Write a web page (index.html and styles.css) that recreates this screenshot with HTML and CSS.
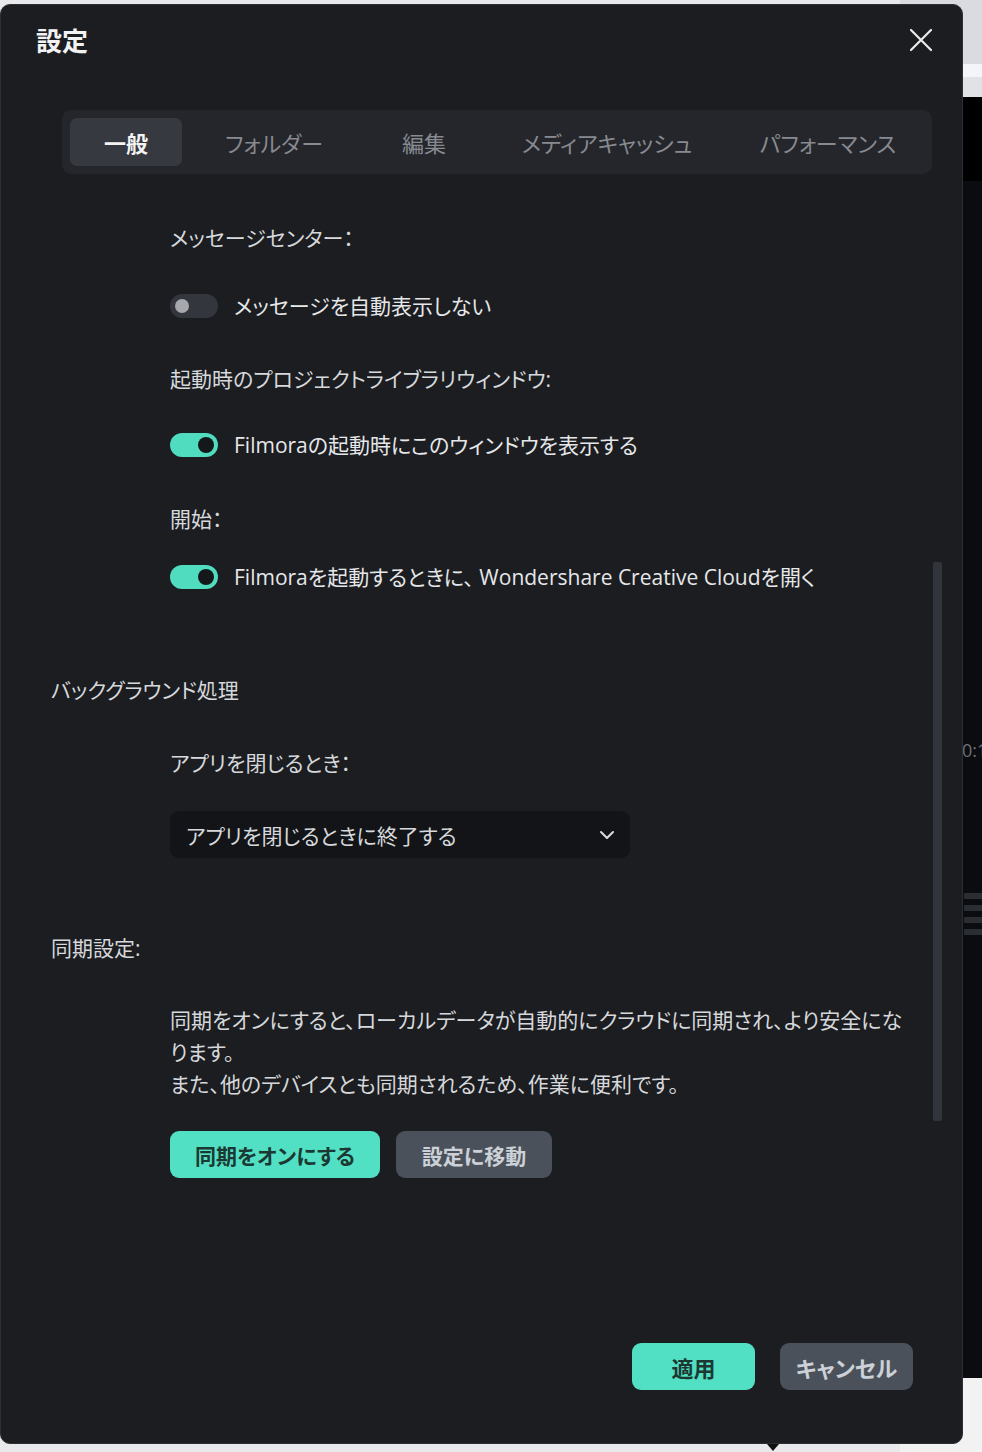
FILE: index.html
```html
<!DOCTYPE html>
<html lang="ja">
<head>
	<meta charset="utf-8">
	<title>設定</title>
	<link rel="stylesheet" href="styles.css">
</head>
<body>
	<!-- App window behind the dialog -->
	<div class="behind">
		<div class="behind-top"></div>
		<div class="behind-stripe"></div>
		<div class="behind-bar"></div>
		<div class="behind-app">
			<span class="behind-time">0:1</span>
			<div class="behind-rows">
				<i></i><i></i><i></i><i></i>
			</div>
		</div>
		<div class="behind-bottom"></div>
	</div>

	<!-- Settings dialog -->
	<div class="dialog">
		<header class="dialog-header">
			<h1>設定</h1>
			<svg class="close" width="24" height="24" viewBox="0 0 24 24">
				<path d="M2 2 L22 22 M22 2 L2 22" stroke="#ececec" stroke-width="2.2" stroke-linecap="round"/>
			</svg>
		</header>

		<nav class="tabs">
			<span class="tab tab-general active">一般</span>
			<span class="tab tab-folder">フォルダー</span>
			<span class="tab tab-edit">編集</span>
			<span class="tab tab-cache">メディアキャッシュ</span>
			<span class="tab tab-perf">パフォーマンス</span>
		</nav>

		<div class="content">
			<p class="label first">メッセージセンター：</p>
			<div class="toggle-row row-1">
				<span class="toggle"></span>
				<span>メッセージを自動表示しない</span>
			</div>

			<p class="label lbl-2">起動時のプロジェクトライブラリウィンドウ:</p>
			<div class="toggle-row row-2">
				<span class="toggle on"></span>
				<span>Filmoraの起動時にこのウィンドウを表示する</span>
			</div>

			<p class="label lbl-3">開始：</p>
			<div class="toggle-row row-3">
				<span class="toggle on"></span>
				<span>Filmoraを起動するときに、 Wondershare Creative Cloudを開く</span>
			</div>

			<h2 class="heading head-1">バックグラウンド処理</h2>
			<p class="label lbl-4">アプリを閉じるとき：</p>
			<div class="select">
				<span>アプリを閉じるときに終了する</span>
				<svg width="16" height="10" viewBox="0 0 16 10">
					<path d="M2 2 L8 8 L14 2" fill="none" stroke="#dcdcdc" stroke-width="2" stroke-linecap="round" stroke-linejoin="round"/>
				</svg>
			</div>

			<h2 class="heading head-2">同期設定:</h2>
			<p class="desc">同期をオンにすると、ローカルデータが自動的にクラウドに同期され、より安全にな<br>ります。<br>また、他のデバイスとも同期されるため、作業に便利です。</p>
			<div class="actions">
				<button class="btn primary sync">同期をオンにする</button>
				<button class="btn secondary goto">設定に移動</button>
			</div>
		</div>

		<div class="scroll-thumb"></div>

		<footer class="dialog-footer">
			<button class="btn primary apply">適用</button>
			<button class="btn secondary cancel">キャンセル</button>
		</footer>
	</div>

	<div class="pointer"></div>
</body>
</html>
```

FILE: styles.css
```css
html, body {
	margin: 0;
	padding: 0;
}

body {
	position: relative;
	width: 982px;
	height: 1452px;
	overflow: hidden;
	background-color: #e9e9eb;
	font-family: "Open Sans", "Noto Sans CJK JP", sans-serif;
	font-feature-settings: "palt";
	color: #d6d8db;
	padding-top: 4px;
	box-sizing: border-box;
}

/* app window behind */
.behind {
	position: absolute;
	left: 900px;
	top: 0;
	width: 82px;
	height: 1452px;
	display: flex;
	flex-direction: column;
}

.behind-top {
	height: 64px;
	background-color: #dadbe0;
}

.behind-stripe {
	height: 13px;
	background-color: #f4f5f8;
}

.behind-bar {
	height: 20px;
	background-color: #e1e2e6;
}

.behind-app {
	position: relative;
	height: 1281px;
	background-color: #0a0c0f;
	border-top: 84px solid #000;
	box-sizing: border-box;
}

.behind-time {
	position: absolute;
	left: 62px;
	top: 557px;
	font-size: 18px;
	color: #6d7076;
}

.behind-rows {
	position: absolute;
	left: 64px;
	top: 712px;
	display: flex;
	flex-direction: column;
	gap: 6px;
}

.behind-rows i {
	display: block;
	width: 20px;
	height: 6px;
	background-color: #2a2d32;
}

.behind-bottom {
	flex: 1;
	background-color: #f2f2f2;
}

/* dialog */
.dialog {
	position: relative;
	width: 963px;
	height: 1440px;
	background-color: #1b1d21;
	border: 1px solid #2c2f34;
	border-radius: 10px;
	box-sizing: border-box;
	display: flex;
	flex-direction: column;
}

.dialog-header {
	height: 69px;
	display: flex;
	align-items: center;
	justify-content: space-between;
	padding: 0 29px 0 35px;
}

.dialog-header h1 {
	margin: 0;
	font-size: 26px;
	font-weight: 700;
	color: #f2f2f2;
}

.tabs {
	margin: 36px 30px 0 61px;
	height: 64px;
	padding: 8px;
	box-sizing: border-box;
	background-color: #24262b;
	border-radius: 9px;
	display: flex;
}

.tab {
	display: flex;
	align-items: center;
	justify-content: center;
	flex-shrink: 0;
	white-space: nowrap;
	border-radius: 7px;
	font-size: 22px;
	color: #878a90;
}

.tab-general { width: 112px; }
.tab-folder { width: 184px; }
.tab-edit { width: 116px; }
.tab-cache { width: 250px; }
.tab-perf { width: 192px; }

.tab.active {
	background-color: #36393f;
	color: #f4f4f4;
	font-weight: 700;
}

.content {
	padding-left: 50px;
	display: flex;
	flex-direction: column;
	align-items: flex-start;
}

.label, .heading, .toggle-row {
	margin: 0;
	height: 30px;
	line-height: 30px;
	font-size: 21px;
	font-weight: 400;
	color: #d6d8db;
	white-space: nowrap;
}

.label, .toggle-row, .select, .desc, .actions {
	margin-left: 119px;
}

.first { margin-top: 49px; }
.row-1 { margin-top: 38px; }
.lbl-2 { margin-top: 43px; }
.row-2 { margin-top: 36px; }
.lbl-3 { margin-top: 44px; }
.row-3 { margin-top: 28px; }
.head-1 { margin-top: 83px; }
.lbl-4 { margin-top: 43px; }
.head-2 { margin-top: 75px; }

.toggle-row {
	display: flex;
	align-items: center;
	gap: 16px;
	color: #e6e7e9;
}

.toggle {
	position: relative;
	flex-shrink: 0;
	width: 48px;
	height: 24px;
	border-radius: 12px;
	background-color: #33363c;
}

.toggle::after {
	content: "";
	position: absolute;
	left: 5px;
	top: 5px;
	width: 14px;
	height: 14px;
	border-radius: 50%;
	background-color: #a6a8ad;
}

.toggle.on {
	background-color: #4fdcbf;
}

.toggle.on::after {
	left: auto;
	right: 4px;
	top: 4px;
	width: 16px;
	height: 16px;
	background-color: #15181b;
}

.select {
	margin-top: 33px;
	width: 460px;
	height: 47px;
	box-sizing: border-box;
	padding: 0 15px 0 16px;
	background-color: #121417;
	border-radius: 9px;
	display: flex;
	align-items: center;
	justify-content: space-between;
	font-size: 21px;
	color: #d6d8db;
}

.desc {
	margin-top: 41px;
	margin-bottom: 0;
	font-size: 21px;
	line-height: 32px;
	color: #d6d8db;
	white-space: nowrap;
}

.actions {
	margin-top: 31px;
	display: flex;
	gap: 16px;
}

.btn {
	height: 47px;
	padding: 0;
	border: none;
	border-radius: 9px;
	font-family: inherit;
	font-feature-settings: "palt";
	font-size: 21px;
	font-weight: 700;
	white-space: nowrap;
	cursor: pointer;
}

.btn.primary {
	background-color: #52e0c4;
	color: #1b3832;
}

.btn.secondary {
	background-color: #4a515b;
	color: #ccd1d7;
}

.sync { width: 210px; }
.goto { width: 156px; }

.apply {
	width: 123px;
	font-size: 22px;
}

.cancel {
	width: 133px;
	font-size: 22px;
}

.scroll-thumb {
	position: absolute;
	left: 932px;
	top: 557px;
	width: 9px;
	height: 559px;
	border-radius: 2px;
	background-color: #31343a;
}

.dialog-footer {
	margin-top: auto;
	padding: 0 49px 53px 0;
	display: flex;
	justify-content: flex-end;
	gap: 25px;
}

.pointer {
	position: absolute;
	left: 767px;
	top: 1444px;
	width: 0;
	height: 0;
	border-left: 6px solid transparent;
	border-right: 6px solid transparent;
	border-top: 7px solid #111;
}
```
